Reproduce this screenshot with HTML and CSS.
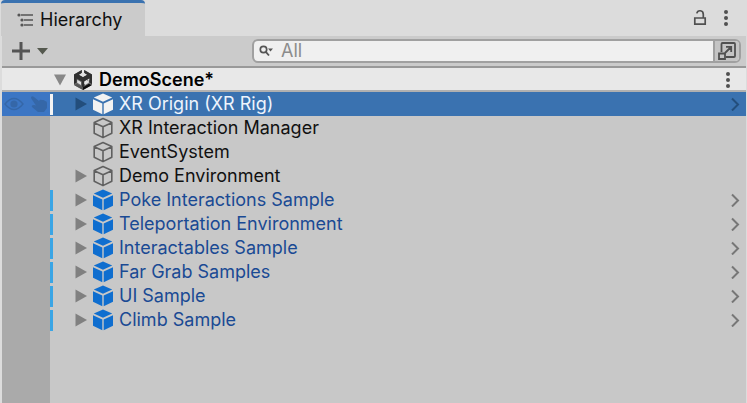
FILE: index.html
```html
<!DOCTYPE html>
<html lang="en">
<head>
<meta charset="utf-8">
<title>Hierarchy</title>
<link rel="stylesheet" href="styles.css">
</head>
<body>
<svg class="defs" aria-hidden="true">
  <symbol id="cube" viewBox="0 0 22 22">
    <path d="M11 1.6 19.8 5.6V16.2L11 20.6 2.2 16.2V5.6ZM2.2 5.8 11 9.8 19.8 5.8M11 9.8V20.6" fill="none" stroke="currentColor" stroke-width="1.6" stroke-linejoin="round"/>
  </symbol>
  <symbol id="prefab" viewBox="0 0 22 22">
    <path d="M11 .6 20.2 4.6 11 8.8 1.8 4.6ZM1 6.2 10.3 10.4V21.2L1 16.8ZM21 6.2 11.7 10.4V21.2L21 16.8Z" fill="currentColor"/>
  </symbol>
  <symbol id="fold" viewBox="0 0 12 14"><path d="M.5 .5 12 7 .5 13.5Z" fill="currentColor"/></symbol>
  <symbol id="open" viewBox="0 0 10 14"><path d="M2 1.5 8 7.5 2 13.5" fill="none" stroke="currentColor" stroke-width="2"/></symbol>
  <symbol id="dots" viewBox="0 0 6 18"><g fill="currentColor"><circle cx="3" cy="3" r="2"/><circle cx="3" cy="9" r="2"/><circle cx="3" cy="15" r="2"/></g></symbol>
</svg>
<main class="panel">
  <header class="tabs">
    <h1 class="tab">
      <svg width="18" height="14" viewBox="0 0 18 14" aria-hidden="true"><g fill="#555"><circle cx="2" cy="2" r="1.6"/><circle cx="5" cy="7" r="1.6"/><circle cx="5" cy="12" r="1.6"/><path d="M4 1.2H16V2.8H4ZM7 6.2H16V7.8H7ZM7 11.2H16V12.8H7Z"/></g></svg>
      <span>Hierarchy</span>
    </h1>
    <div class="tab-actions">
      <button aria-label="Lock"><svg width="14" height="18" viewBox="0 0 14 18"><path d="M1.8 9H12.2V15.2H1.8ZM10.3 9V5.5C10.3 .8 4.6 .6 3.8 4.4" fill="none" stroke="#505050" stroke-width="1.7"/></svg></button>
      <button aria-label="Window menu"><svg width="6" height="18"><use href="#dots"/></svg></button>
    </div>
  </header>
  <div class="toolbar">
    <button class="add" aria-label="Create">
      <svg width="38" height="20" viewBox="0 0 38 20"><path d="M0 10H18M9 1V19" stroke="#555" stroke-width="3"/><path d="M25 7H36L30.5 13.5Z" fill="#55594f"/></svg>
    </button>
    <div class="search">
      <svg width="14" height="12" viewBox="0 0 14 12" aria-hidden="true"><circle cx="4.5" cy="4.5" r="3.2" fill="none" stroke="#555" stroke-width="1.7"/><path d="M6.8 6.8 10 10.5" stroke="#555" stroke-width="1.8"/><path d="M9 3.5H14L11.5 6.5Z" fill="#555"/></svg>
      <input type="text" placeholder="All" aria-label="Search hierarchy">
      <button aria-label="Open in search window"><svg width="20" height="20" viewBox="0 0 20 20"><g fill="none" stroke="#505050" stroke-width="1.8"><path d="M4.5 11V3Q4.5 2 5.5 2H17Q18 2 18 3V15Q18 16 17 16H9M2 12.5H8V18H2ZM8 12 14 6M9 5.8H14.2V11"/></g></svg></button>
    </div>
  </div>
  <div class="scene">
    <svg class="down" width="12" height="12" viewBox="0 0 12 12" aria-hidden="true"><path d="M0 .5H12L6 11.5Z" fill="#888"/></svg>
    <svg class="unity" width="20" height="20" viewBox="0 0 20 20" aria-hidden="true">
      <path d="M8.8 0V3L6 4.7 10 7 14 4.7 11.2 3V0L19 4.6V7L15.5 5.5 14.8 7.2 11 9.4V14.4L14 12.6V9.5L19 11V15L10 20 1 15V4.6Z" fill="#6a6a6a"/>
      <path d="M8.8 0V3L5.8 4.8 10 7.2 14.2 4.8 11.2 3V0L19 4.6V14L16.3 12.5V8.5L11.2 11.4V16.5L10 17.2 8.8 16.5V11.4L3.7 8.5V12.5L1 14V4.6Z" fill="#303030"/>
      <path d="M1.4 15.2 4 13.7 10 17.2V20Z" fill="#555"/>
      <path d="M10 20V17.2L16 13.7 18.6 15.2Z" fill="#0c0c0c"/>
      <path d="M4.2 9.8 8 12V15L4.2 12.8ZM15.8 9.8 12 12V15L15.8 12.8ZM6.4 4.7 10 2.6 13.6 4.7 10 6.6Z" fill="#e0e0e0"/>
    </svg>
    <h2>DemoScene*</h2>
    <button aria-label="Scene menu"><svg width="6" height="18"><use href="#dots"/></svg></button>
  </div>
  <ul class="tree">
    <li class="row selected">
      <span class="gutter">
        <svg width="20" height="14" viewBox="0 0 20 14" aria-hidden="true"><path d="M1 7Q10-4 19 7Q10 18 1 7Z" fill="none" stroke="currentColor" stroke-width="1.4"/><circle cx="10" cy="7" r="3.6" fill="currentColor"/></svg>
        <svg width="18" height="18" viewBox="0 0 18 18" aria-hidden="true"><path d="M1 2.5Q2 .5 4 2L9 6Q10 4 12 5Q14 4.5 15 6Q17 6 17 8V13L14 17H8L2 12Q1 10 4 10L6 10.5 1.5 4Z" fill="currentColor"/></svg>
      </span>
      <span class="mark"></span>
      <button class="toggle" aria-label="Expand"><svg width="12" height="14"><use href="#fold"/></svg></button>
      <svg class="icon" width="22" height="22"><use href="#prefab"/></svg><span class="name">XR Origin (XR Rig)</span>
      <button class="enter" aria-label="Open prefab"><svg width="10" height="14"><use href="#open"/></svg></button>
    </li>
    <li class="row"><span class="gutter"></span><span class="mark"></span><span class="toggle"></span><svg class="icon" width="22" height="22"><use href="#cube"/></svg><span class="name">XR Interaction Manager</span></li>
    <li class="row"><span class="gutter"></span><span class="mark"></span><span class="toggle"></span><svg class="icon" width="22" height="22"><use href="#cube"/></svg><span class="name">EventSystem</span></li>
    <li class="row"><span class="gutter"></span><span class="mark"></span><button class="toggle" aria-label="Expand"><svg width="12" height="14"><use href="#fold"/></svg></button><svg class="icon" width="22" height="22"><use href="#cube"/></svg><span class="name">Demo Environment</span></li>
    <li class="row prefab"><span class="gutter"></span><span class="mark"></span><button class="toggle" aria-label="Expand"><svg width="12" height="14"><use href="#fold"/></svg></button><svg class="icon" width="22" height="22"><use href="#prefab"/></svg><span class="name">Poke Interactions Sample</span><button class="enter" aria-label="Open prefab"><svg width="10" height="14"><use href="#open"/></svg></button></li>
    <li class="row prefab"><span class="gutter"></span><span class="mark"></span><button class="toggle" aria-label="Expand"><svg width="12" height="14"><use href="#fold"/></svg></button><svg class="icon" width="22" height="22"><use href="#prefab"/></svg><span class="name">Teleportation Environment</span><button class="enter" aria-label="Open prefab"><svg width="10" height="14"><use href="#open"/></svg></button></li>
    <li class="row prefab"><span class="gutter"></span><span class="mark"></span><button class="toggle" aria-label="Expand"><svg width="12" height="14"><use href="#fold"/></svg></button><svg class="icon" width="22" height="22"><use href="#prefab"/></svg><span class="name">Interactables Sample</span><button class="enter" aria-label="Open prefab"><svg width="10" height="14"><use href="#open"/></svg></button></li>
    <li class="row prefab"><span class="gutter"></span><span class="mark"></span><button class="toggle" aria-label="Expand"><svg width="12" height="14"><use href="#fold"/></svg></button><svg class="icon" width="22" height="22"><use href="#prefab"/></svg><span class="name">Far Grab Samples</span><button class="enter" aria-label="Open prefab"><svg width="10" height="14"><use href="#open"/></svg></button></li>
    <li class="row prefab"><span class="gutter"></span><span class="mark"></span><button class="toggle" aria-label="Expand"><svg width="12" height="14"><use href="#fold"/></svg></button><svg class="icon" width="22" height="22"><use href="#prefab"/></svg><span class="name">UI Sample</span><button class="enter" aria-label="Open prefab"><svg width="10" height="14"><use href="#open"/></svg></button></li>
    <li class="row prefab"><span class="gutter"></span><span class="mark"></span><button class="toggle" aria-label="Expand"><svg width="12" height="14"><use href="#fold"/></svg></button><svg class="icon" width="22" height="22"><use href="#prefab"/></svg><span class="name">Climb Sample</span><button class="enter" aria-label="Open prefab"><svg width="10" height="14"><use href="#open"/></svg></button></li>
    <li class="rest" aria-hidden="true"><span class="gutter"></span></li>
  </ul>
</main>
</body>
</html>
```
FILE: styles.css
```css
* { box-sizing: border-box; }

body {
  margin: 0;
  background: #dcdcdc;
  color: #111;
  font: 18px/24px Inter, "Liberation Sans", sans-serif;
}

h1, h2 { margin: 0; font-size: 18px; line-height: 24px; }
svg { display: block; flex: none; }
.defs { display: none; }

button {
  display: flex;
  align-items: center;
  justify-content: center;
  padding: 0;
  border: 0;
  background: none;
  color: #505050;
}

.panel {
  display: flex;
  flex-direction: column;
  min-height: 100vh;
  padding: 0 1px 0 2px;
}

.tabs { display: flex; justify-content: space-between; height: 36px; }

.tab {
  display: flex;
  align-items: center;
  gap: 5px;
  margin-left: -1px;
  padding: 0 23px 0 16px;
  border-top: 3px solid #3a72b0;
  border-radius: 4px 4px 0 0;
  background: #cbcbcb;
  font-weight: 400;
}

.tab-actions { display: flex; align-items: center; gap: 16px; padding-right: 17px; }

.toolbar {
  display: flex;
  align-items: center;
  justify-content: space-between;
  height: 32px;
  padding: 0 5px 0 10px;
  border-bottom: 2px solid #999;
  background: #cbcbcb;
}

.search {
  display: flex;
  align-items: center;
  flex: 0 1 489px;
  height: 24px;
  padding-left: 5px;
  border: 2px solid #a0a0a0;
  border-radius: 6px;
  background: #f0f0f0;
  overflow: hidden;
}

.search input {
  flex: 1;
  min-width: 0;
  padding: 0 8px;
  border: 0;
  outline: 0;
  background: none;
  font: inherit;
}

.search input::placeholder { color: #8c8c8c; opacity: 1; }

.search button {
  align-self: stretch;
  width: 26px;
  border-left: 2px solid #a0a0a0;
  background: #c4c4c4;
}

.scene {
  display: flex;
  align-items: center;
  height: 24px;
  padding: 1px 15px 0 52px;
  border-bottom: 2px solid #b0b0b0;
  background: #e8e8e8;
}

.scene h2 { margin-left: 6px; font-weight: 600; color: #000; }
.scene button { margin-left: auto; }
.unity { margin-left: 7px; }

.tree {
  display: flex;
  flex: 1;
  flex-direction: column;
  margin: 0;
  padding: 0;
  list-style: none;
  background: #c8c8c8;
}

.row { display: flex; align-items: center; height: 24px; }
.rest { display: flex; flex: 1; }

.gutter {
  display: flex;
  align-items: center;
  gap: 6px;
  align-self: stretch;
  flex: none;
  width: 48px;
  padding-left: 2px;
  background: #aaa;
}

.mark { flex: none; width: 3px; height: 21px; }
.toggle { flex: none; width: 12px; margin: 0 5px 0 22px; color: #808080; }
.icon { color: #606060; }
.name { margin-left: 5px; white-space: nowrap; }
.enter { margin: 0 6px 0 auto; color: #777; }

.prefab .mark { background: #3aa5e5; }
.prefab .icon { color: #0f6ecf; }
.prefab .name { color: #1a4a94; }

.selected { background: #3a72b0; color: #eef4fc; }
.selected .gutter { background: #3c76c4; color: #3567a8; }
.selected .mark { background: #f4f4f4; }
.selected .toggle, .selected .enter { color: #234e7c; }
.selected .icon { color: #f2f2f2; }
```
